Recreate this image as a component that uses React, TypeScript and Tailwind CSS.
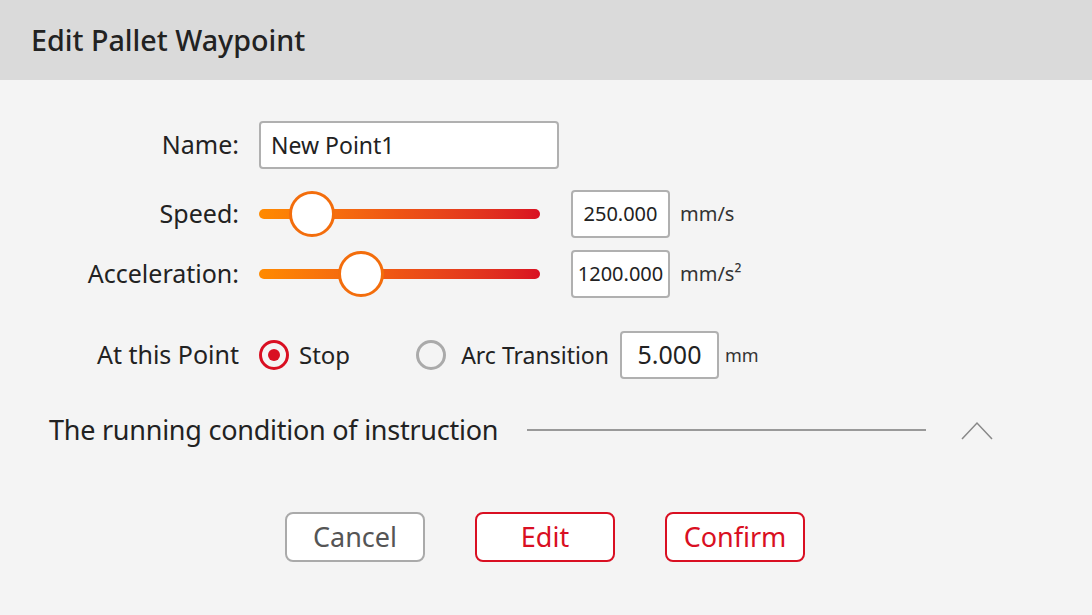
import React from 'react';

const font = { fontFamily: '"Noto Sans", "Open Sans", sans-serif' };

function Slider({ pos }: { pos: number }) {
  return (
    <div className="relative h-[48px] w-[281px] flex items-center">
      <div className="h-[10px] w-full rounded-full bg-gradient-to-r from-[#ff8a00] via-[#ee5314] to-[#d90f22]" />
      <div
        className="absolute top-[1px] h-[46px] w-[46px] -ml-[23px] rounded-full border-[3px] border-[#f36d0c] bg-white"
        style={{ left: pos }}
      />
    </div>
  );
}

function NumBox({ value, size = 'text-[20px]' }: { value: string; size?: string }) {
  return (
    <div className={`w-[99px] h-[48px] flex items-center justify-center rounded-[4px] border-2 border-[#b0b0b0] bg-white ${size} text-[#222]`}>
      {value}
    </div>
  );
}

function Radio({ checked }: { checked: boolean }) {
  return checked ? (
    <div className="h-[30px] w-[30px] rounded-full border-[3px] border-[#d90f22] flex items-center justify-center">
      <div className="h-[12px] w-[12px] rounded-full bg-[#d90f22]" />
    </div>
  ) : (
    <div className="h-[30px] w-[30px] rounded-full border-[3px] border-[#aaaaaa]" />
  );
}

export default function App() {
  return (
    <div className="w-[1092px] h-[615px] bg-[#f4f4f4] text-[#222]" style={font}>
      {/* Header */}
      <div className="h-[80px] bg-[#dadada] flex items-center pl-[31px]">
        <h1 className="text-[28.7px] font-medium text-[#222]">Edit Pallet Waypoint</h1>
      </div>

      <div className="pt-[41px]">
        {/* Name */}
        <div className="flex items-center h-[48px]">
          <div className="w-[239px] text-right text-[25px]">Name:</div>
          <div className="ml-[20px] w-[300px] h-[48px] flex items-center pl-[10px] rounded-[4px] border-2 border-[#b0b0b0] bg-white text-[23px]">
            New Point1
          </div>
        </div>

        {/* Speed */}
        <div className="flex items-center h-[48px] mt-[21px]">
          <div className="w-[239px] text-right text-[25px]">Speed:</div>
          <div className="ml-[20px]">
            <Slider pos={53} />
          </div>
          <div className="ml-[31px]">
            <NumBox value="250.000" />
          </div>
          <span className="ml-[10px] text-[20px] text-[#333]">mm/s</span>
        </div>

        {/* Acceleration */}
        <div className="flex items-center h-[48px] mt-[12px]">
          <div className="w-[239px] text-right text-[25px]">Acceleration:</div>
          <div className="ml-[20px]">
            <Slider pos={102} />
          </div>
          <div className="ml-[31px]">
            <NumBox value="1200.000" />
          </div>
          <span className="ml-[10px] text-[20px] text-[#333]">mm/s²</span>
        </div>

        {/* At this point */}
        <div className="flex items-center h-[48px] mt-[33px]">
          <div className="w-[239px] text-right text-[25px]">At this Point</div>
          <div className="ml-[20px] flex items-center">
            <Radio checked />
            <span className="ml-[10px] text-[24px]">Stop</span>
          </div>
          <div className="ml-[66px] flex items-center">
            <Radio checked={false} />
            <span className="ml-[15px] text-[23px]">Arc Transition</span>
          </div>
          <div className="ml-[11px]">
            <NumBox value="5.000" size="text-[25px]" />
          </div>
          <span className="ml-[6px] text-[18px] text-[#333]">mm</span>
        </div>

        {/* Running condition */}
        <div className="flex items-center h-[30px] mt-[36px] pl-[49px]">
          <span className="text-[27px] tracking-[-0.25px]">The running condition of instruction</span>
          <div className="ml-[29px] w-[399px] h-[2px] bg-[#999]" />
          <svg className="ml-[35px]" width="32" height="20" viewBox="0 0 32 20">
            <polyline points="1,19 16,3 31,19" fill="none" stroke="#888" strokeWidth="1.5" />
          </svg>
        </div>

        {/* Buttons */}
        <div className="flex justify-center gap-[50px] mt-[67px] pr-[2px]">
          <button className="w-[140px] h-[50px] rounded-[8px] border-2 border-[#aaaaaa] bg-white text-[27px] text-[#555]">
            Cancel
          </button>
          <button className="w-[140px] h-[50px] rounded-[8px] border-2 border-[#d90f22] bg-white text-[27px] text-[#d90f22]">
            Edit
          </button>
          <button className="w-[140px] h-[50px] rounded-[8px] border-2 border-[#d90f22] bg-white text-[27px] text-[#d90f22]">
            Confirm
          </button>
        </div>
      </div>
    </div>
  );
}
